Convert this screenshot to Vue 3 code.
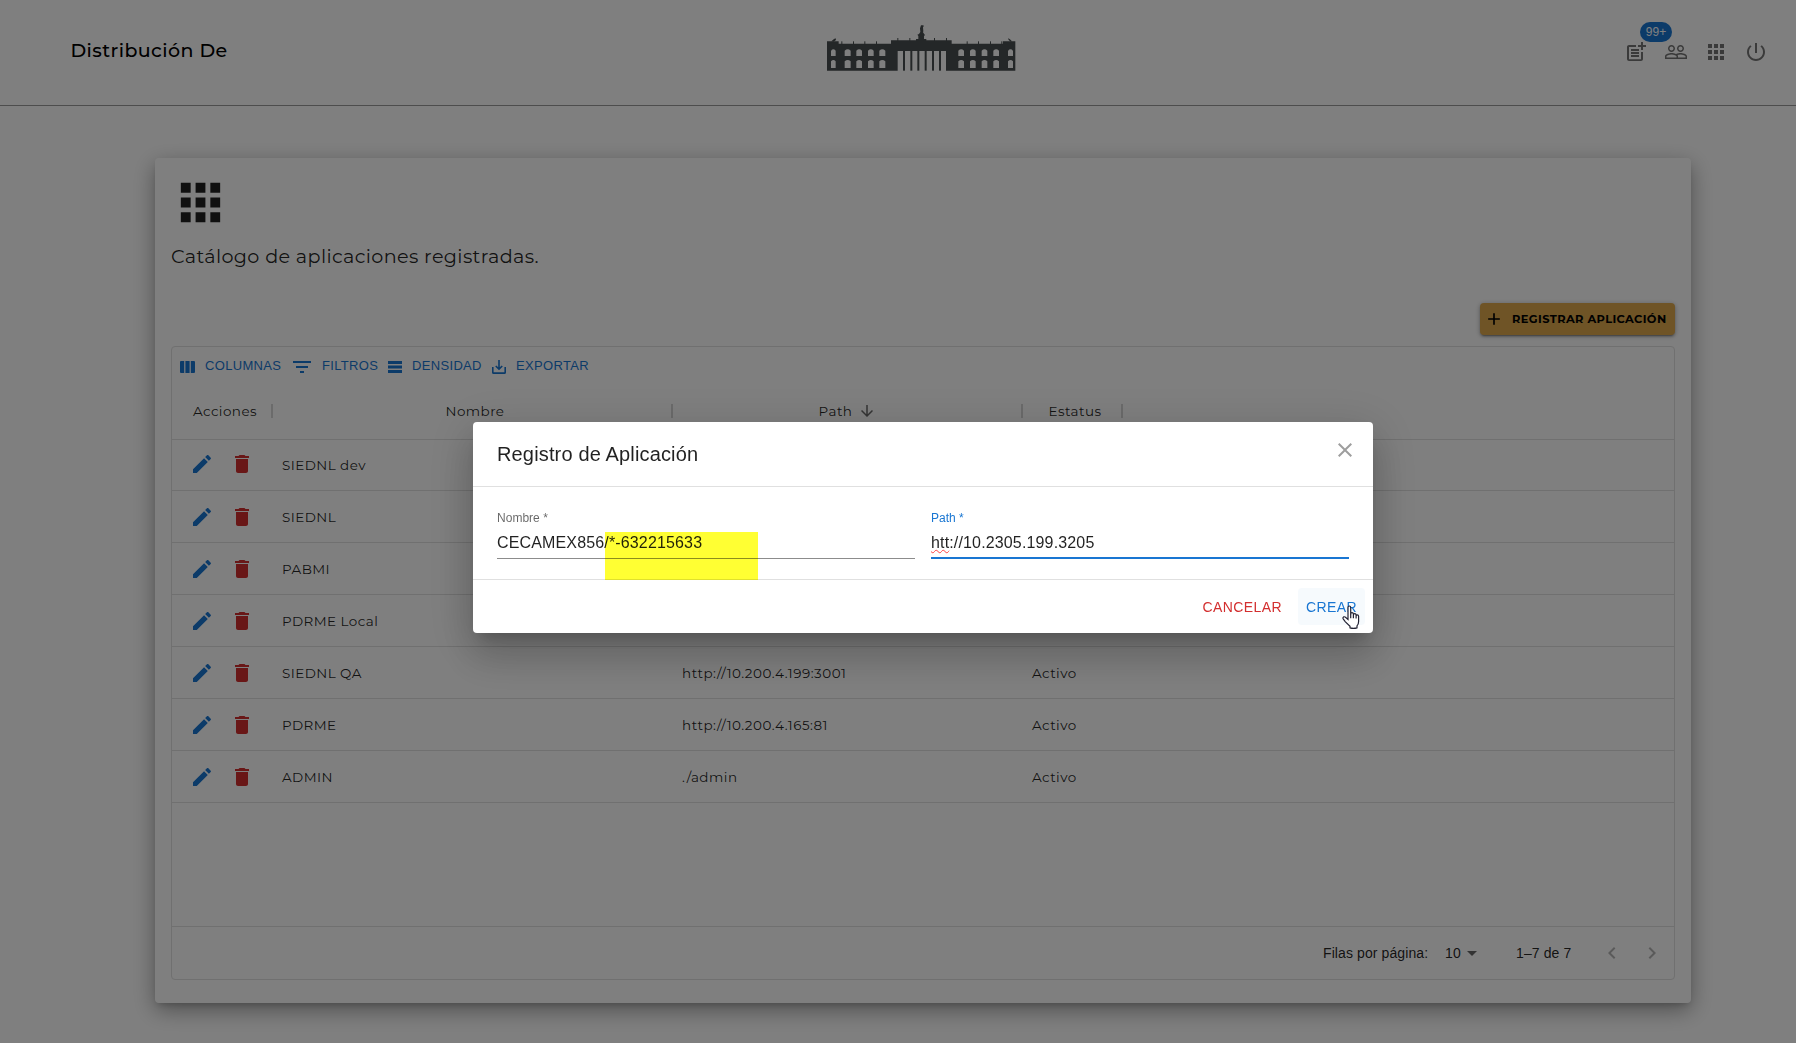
<script setup>
const icons = {
  apps: 'M4 8h4V4H4v4zm6 12h4v-4h-4v4zm-6 0h4v-4H4v4zm0-6h4v-4H4v4zm6 0h4v-4h-4v4zm6-10v4h4V4h-4zm-6 4h4V4h-4v4zm6 6h4v-4h-4v4zm0 6h4v-4h-4v4z',
  post: 'M17 19.22H5V7h7V5H5c-1.1 0-2 .9-2 2v12c0 1.1.9 2 2 2h12c1.1 0 2-.9 2-2v-7h-2v7.22zM19 2h-2v3h-3v2h3v3h2V7h3V5h-3V2zM7 9h8v2H7zM7 12v2h8v-2zM7 15h8v2H7z',
  people: 'M16.5 13c-1.2 0-3.07.34-4.5 1-1.43-.67-3.3-1-4.5-1C5.33 13 1 14.08 1 16.25V19h22v-2.75c0-2.17-4.33-3.25-6.5-3.25zm-4 4.5h-10v-1.25c0-.54 2.56-1.75 5-1.75s5 1.21 5 1.75v1.25zm9 0H14v-1.25c0-.46-.2-.86-.52-1.22.88-.3 1.96-.53 3.02-.53 2.44 0 5 1.21 5 1.75v1.25zM7.5 12c1.93 0 3.5-1.57 3.5-3.5S9.43 5 7.5 5 4 6.57 4 8.5 5.57 12 7.5 12zm0-5.5c1.1 0 2 .9 2 2s-.9 2-2 2-2-.9-2-2 .9-2 2-2zm9 5.5c1.93 0 3.5-1.57 3.5-3.5S18.43 5 16.5 5 13 6.57 13 8.5s1.57 3.5 3.5 3.5zm0-5.5c1.1 0 2 .9 2 2s-.9 2-2 2-2-.9-2-2 .9-2 2-2z',
  power: 'M13 3h-2v10h2V3zm4.83 2.17l-1.42 1.42C17.99 7.86 19 9.81 19 12c0 3.87-3.13 7-7 7s-7-3.13-7-7c0-2.19 1.01-4.14 2.58-5.42L6.17 5.17C4.23 6.82 3 9.26 3 12c0 4.97 4.03 9 9 9s9-4.03 9-9c0-2.74-1.23-5.18-3.17-6.83z',
  edit: 'M3 17.25V21h3.75L17.81 9.94l-3.75-3.75L3 17.25zM20.71 7.04c.39-.39.39-1.02 0-1.41l-2.34-2.34c-.39-.39-1.02-.39-1.41 0l-1.83 1.83 3.75 3.75 1.83-1.83z',
  trash: 'M6 19c0 1.1.9 2 2 2h8c1.1 0 2-.9 2-2V7H6v12zM19 4h-3.5l-1-1h-5l-1 1H5v2h14V4z',
  arrow: 'M20 12l-1.41-1.41L13 16.17V4h-2v12.17l-5.58-5.59L4 12l8 8 8-8z',
  add: 'M19 13h-6v6h-2v-6H5v-2h6V5h2v6h6v2z',
  close: 'M19 6.41L17.59 5 12 10.59 6.41 5 5 6.41 10.59 12 5 17.59 6.41 19 12 13.41 17.59 19 19 17.59 13.41 12z',
  left: 'M15.41 7.41L14 6l-6 6 6 6 1.41-1.41L10.83 12z',
  right: 'M10 6L8.59 7.41 13.17 12l-4.58 4.59L10 18l6-6z',
}
const tools = [
  { id: 'columns', label: 'COLUMNAS', w: 15, h: 12, box: '0 0 15 12', d: 'M0 1q0-1 1-1h3.2v12H1q-1 0-1-1zM5.4 0h4.2v12H5.4zM10.8 0H14q1 0 1 1v10q0 1-1 1h-3.2z' },
  { id: 'filters', label: 'FILTROS', w: 18, h: 12, box: '0 0 18 12', d: 'M0 0h18v2H0zM3 5h12v2H3zM7 10h4v2H7z' },
  { id: 'density', label: 'DENSIDAD', w: 14, h: 12, box: '0 0 14 12', d: 'M0 0h14v3H0zM0 4.5h14v3H0zM0 9h14v3H0z' },
  { id: 'export', label: 'EXPORTAR', w: 14, h: 14, box: '0 0 14 14', d: 'M12.4 7v5.3H1.6V7H0v5.4Q0 14 1.6 14h10.8q1.6 0 1.6-1.6V7zM7.8 7.3l1.9-1.9 1.1 1.1L7 10.3 3.2 6.5l1.1-1.1 1.9 1.9V0h1.6z' },
]
const rows = [
  { name: 'SIEDNL dev', path: '', status: 'Activo' },
  { name: 'SIEDNL', path: '', status: 'Activo' },
  { name: 'PABMI', path: '', status: 'Activo' },
  { name: 'PDRME Local', path: '', status: 'Activo' },
  { name: 'SIEDNL QA', path: 'http://10.200.4.199:3001', status: 'Activo' },
  { name: 'PDRME', path: 'http://10.200.4.165:81', status: 'Activo' },
  { name: 'ADMIN', path: './admin', status: 'Activo' },
]
const windows = [[63, 14], [104, 18], [139, 17], [174, 17], [208, 18], [445, 17], [480, 17], [515, 17], [550, 17], [594, 15]]
const columns = [279, 301, 322, 344, 366, 387]
const spikesLow = [94, 129, 163, 198, 470, 504, 540, 574]
const spikesHigh = [262, 298, 372, 408]
</script>

<template>
  <div class="page">
    <header class="topbar">
      <div class="brand">Distribución De</div>
      <svg class="building" viewBox="51 42 570 141" width="190" height="47">
        <g class="stone">
          <path d="M51 94h35v7h157V91h75v-4h7v-9l-3-4 5-2 4-6-1-11 3-9h5l4 1-3 5 1 12-1 3 4 6 2 2-3 3v9h7v4h76v10h154v-7h37v88H51z" />
          <path d="M64 94l8-7 5-2 1 5-7 5zM606 94l-7-7-5-2 2 5 6 5z" />
          <rect v-for="x in spikesLow" :key="x" :x="x" y="94" width="3" height="9" />
          <rect v-for="x in spikesHigh" :key="x" :x="x" y="84" width="3" height="9" />
        </g>
        <g class="gap">
          <template v-for="w in windows" :key="w[0]">
            <path :d="`M${w[0]} 138v-16q${w[1] / 2} -8 ${w[1]} 0v16z`" />
            <path :d="`M${w[0]} 174v-20q${w[1] / 2} -8 ${w[1]} 0v20z`" />
          </template>
          <rect x="263" y="123" width="145" height="60" />
        </g>
        <rect v-for="x in columns" :key="x" class="stone" :x="x" y="122" width="6" height="60" />
      </svg>
      <nav class="actions">
        <span class="action">
          <svg class="i24" viewBox="0 0 24 24"><path :d="icons.post" /></svg>
          <span class="badge">99+</span>
        </span>
        <svg class="i24" viewBox="0 0 24 24"><path :d="icons.people" /></svg>
        <svg class="i24" viewBox="0 0 24 24"><path :d="icons.apps" /></svg>
        <svg class="i24" viewBox="0 0 24 24"><path :d="icons.power" /></svg>
      </nav>
    </header>

    <main class="card">
      <svg class="hero" viewBox="0 0 24 24"><path :d="icons.apps" /></svg>
      <h1>Catálogo de aplicaciones registradas.</h1>
      <div class="register-row">
        <button class="register">
          <svg viewBox="0 0 24 24" width="20" height="20"><path :d="icons.add" /></svg>
          <span>REGISTRAR APLICACIÓN</span>
        </button>
      </div>

      <section class="grid">
        <div class="toolbar">
          <div v-for="t in tools" :key="t.id" class="tool" :class="t.id">
            <svg :viewBox="t.box" :width="t.w" :height="t.h"><path :d="t.d" /></svg>
            <span>{{ t.label }}</span>
          </div>
        </div>
        <div class="row head">
          <div class="cell c1">Acciones</div>
          <div class="cell c2">Nombre</div>
          <div class="cell c3"><span>Path</span><svg viewBox="0 0 24 24" width="18" height="18"><path :d="icons.arrow" /></svg></div>
          <div class="cell c4">Estatus</div>
        </div>
        <div v-for="r in rows" :key="r.name" class="row body">
          <div class="cell c1">
            <svg class="i24 edit" viewBox="0 0 24 24"><path :d="icons.edit" /></svg>
            <svg class="i24 trash" viewBox="0 0 24 24"><path :d="icons.trash" /></svg>
          </div>
          <div class="cell c2">{{ r.name }}</div>
          <div class="cell c3">{{ r.path }}</div>
          <div class="cell c4">{{ r.status }}</div>
        </div>
        <footer class="pager">
          <span class="per">Filas por página:</span>
          <span class="size">10</span>
          <svg class="caret" viewBox="0 0 10 5" width="10" height="5"><path d="M0 0h10L5 5z" /></svg>
          <span class="range">1–7 de 7</span>
          <svg class="i24 prev" viewBox="0 0 24 24"><path :d="icons.left" /></svg>
          <svg class="i24 next" viewBox="0 0 24 24"><path :d="icons.right" /></svg>
        </footer>
      </section>
    </main>

    <div class="backdrop">
      <div class="dialog">
        <div class="title">
          <h2>Registro de Aplicación</h2>
          <svg class="i24" viewBox="0 0 24 24"><path :d="icons.close" /></svg>
        </div>
        <div class="fields">
          <div class="field">
            <label>Nombre *</label>
            <div class="value">CECAMEX856/*-632215633</div>
          </div>
          <div class="field focused">
            <label>Path *</label>
            <div class="value"><span class="misspelled">htt</span>://10.2305.199.3205</div>
          </div>
        </div>
        <div class="buttons">
          <button class="cancel">CANCELAR</button>
          <button class="create">CREAR</button>
        </div>
        <div class="marker"></div>
        <svg class="pointer" viewBox="0 0 18 24" width="18" height="24">
          <path d="M6 14.5V2.6Q6 1 7.3 1t1.4 1.6V9.200q0-1.500 1.300-1.500t1.400 1.500v.8q0-1.300 1.300-1.300t1.400 1.300v1q0-1.100 1.200-1.100t1.300 1.400v5.200q0 2.800-1.600 4.400v1.900q-3.500 1-7 0v-1.500L3.200 16.600 1.200 13.800q-.7-1.200.4-1.900 1.100-.5 2.200.6z" />
          <path class="fingers" d="M8.700 9v4.200M11.400 10v3.200M14.100 11v2.400" />
        </svg>
      </div>
    </div>
  </div>
</template>

<style>
body { background: #fff; overflow: hidden; }
</style>

<style scoped>
* { box-sizing: border-box; }
.page { width: 1796px; height: 1043px; background: #fff; font-family: Montserrat, Inter, sans-serif; color: rgba(0, 0, 0, .87); overflow: hidden; }
svg { display: block; flex: none; fill: currentColor; }
button { border: 0; margin: 0; font: inherit; background: none; }
h1, h2 { margin: 0; font-weight: 400; }
.i24 { width: 24px; height: 24px; }

.topbar { height: 106px; border-bottom: 1px solid #9a9a9a; display: flex; align-items: flex-start; }
.brand { width: 827px; padding: 39px 0 0 70.5px; font-size: 19px; line-height: 24px; font-weight: 500; letter-spacing: .43px; color: #000; }
.building { margin-top: 24px; }
.stone { fill: #484e50; }
.gap { fill: #fff; }
.actions { margin: 40px 28px 0 auto; display: flex; gap: 16px; color: #757575; }
.action { position: relative; display: block; }
.badge { position: absolute; left: 16px; top: -18px; width: 32px; height: 20px; border-radius: 10px; background: #1976d2; color: #fff; font: 12px/20px "Liberation Sans", sans-serif; text-align: center; }

.card { width: 1536px; height: 845px; margin: 52px 0 0 155px; padding: 15px 16px 0; border-radius: 4px; background: #fff; box-shadow: 0 4px 6px -3px rgba(0, 0, 0, .18), 0 7px 22px rgba(0, 0, 0, .38); }
.hero { width: 59px; height: 59px; }
h1 { margin-top: 12px; font-size: 19.2px; line-height: 24px; letter-spacing: .36px; }
.register-row { display: flex; justify-content: flex-end; margin-top: 35px; }
.register { width: 195px; height: 32px; padding: 0 0 0 4px; display: flex; align-items: center; border-radius: 4px; background: #dea84c; color: #000; font-size: 11.4px; font-weight: 700; letter-spacing: .4px; white-space: nowrap; box-shadow: 0 3px 1px -2px rgba(0, 0, 0, .2), 0 2px 2px rgba(0, 0, 0, .14), 0 1px 5px rgba(0, 0, 0, .3); }
.register span { margin-left: 8px; }

.grid { width: 1504px; height: 634px; margin-top: 11px; border: 1px solid #e0e0e0; border-radius: 4px; display: flex; flex-direction: column; font-size: 13.5px; letter-spacing: .44px; }
.toolbar { height: 37px; padding: 8px 0 0 8px; display: flex; color: #1976d2; font: 13px/22px "Liberation Sans", sans-serif; letter-spacing: .33px; }
.tool { display: flex; height: 22px; align-items: flex-start; }
.tool svg { margin-top: 6px; }
.tool.export svg { margin-top: 5px; }
.columns { width: 113px; }
.columns span { margin-left: 10px; }
.filters { width: 95px; }
.filters span { margin-left: 11px; }
.density { width: 104px; }
.density span, .export span { margin-left: 10px; }
.row { display: flex; height: 52px; border-bottom: 1px solid #e0e0e0; flex: none; }
.head { height: 56px; }
.head + .row { height: 51px; }
.cell { display: flex; align-items: center; padding-left: 10px; flex: none; }
.c1 { width: 100px; }
.c2 { width: 400px; }
.c3 { width: 350px; }
.c4 { width: 100px; }
.body .c1 { gap: 16px; padding-left: 18px; }
.body .c3 { letter-spacing: .51px; }
.head + .row .c1 { padding-bottom: 2px; }
.head + .row .c2 { padding-bottom: 1px; }
.edit { color: #1976d2; }
.trash { color: #d32f2f; }
.head .cell { position: relative; justify-content: center; padding: 0 0 0 6px; height: 54px; }
.head .cell::after { content: ""; position: absolute; right: -1px; top: 20px; width: 2px; height: 14px; background: #d6d6d6; }
.head .c3 { padding-left: 1px; }
.head svg { margin-left: 6px; color: #6a6a6a; }
.pager { height: 53px; margin-top: auto; border-top: 1px solid #e0e0e0; display: flex; align-items: center; font: 14px/20px "Liberation Sans", sans-serif; letter-spacing: .1px; }
.per { width: 123px; margin-left: 1151px; }
.size { width: 22px; margin-left: -1px; }
.caret { color: #666; margin-top: 1px; }
.range { width: 84px; margin-left: 39px; }
.prev, .next { color: #b5b5b5; }
.next { margin-left: 16px; }

.backdrop { position: fixed; inset: 0; padding: 422px 0 0 473px; background: rgba(0, 0, 0, .5); font-family: "Liberation Sans", sans-serif; }
.dialog { position: relative; width: 900px; height: 211px; border-radius: 4px; background: #fff; box-shadow: 0 11px 15px -7px rgba(0, 0, 0, .2), 0 24px 38px 3px rgba(0, 0, 0, .14), 0 9px 46px 8px rgba(0, 0, 0, .12); }
.title { height: 65px; padding: 16px 16px 0 24px; display: flex; justify-content: space-between; border-bottom: 1px solid #e0e0e0; color: #9e9e9e; }
h2 { font-size: 20px; line-height: 32px; letter-spacing: .15px; color: rgba(0, 0, 0, .87); }
.fields { height: 93px; padding: 24px 24px 0; display: flex; gap: 16px; border-bottom: 1px solid #e0e0e0; }
.field { width: 418px; height: 48px; border-bottom: 1px solid #8c8c8c; color: rgba(0, 0, 0, .87); }
label { display: block; height: 14px; font-size: 12px; line-height: 14px; letter-spacing: .02px; color: rgba(0, 0, 0, .6); }
.value { font-size: 16px; line-height: 23px; margin-top: 6px; letter-spacing: .15px; }
.focused { border-bottom: 2px solid #1976d2; }
.focused label { color: #1976d2; }
.misspelled { text-decoration: underline wavy #f44 1px; text-underline-offset: 1px; }
.buttons { display: flex; justify-content: flex-end; padding: 8px; gap: 8px; font-size: 14px; }
.buttons button { height: 37px; padding: 0 8px; border-radius: 4px; white-space: nowrap; letter-spacing: .4px; }
.cancel { color: #d32f2f; }
.create { width: 67px; color: #1976d2; background: rgba(25, 118, 210, .04); }
.marker { position: absolute; left: 132px; top: 110px; width: 153px; height: 48px; background: #ff3; mix-blend-mode: multiply; }
.pointer { position: absolute; left: 869px; top: 183px; fill: #fff; stroke: #223; stroke-width: 1.2; }
.fingers { fill: none; }
</style>
